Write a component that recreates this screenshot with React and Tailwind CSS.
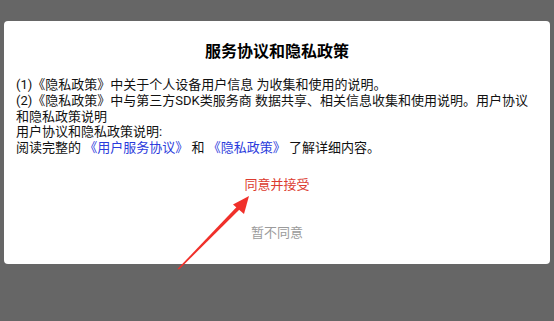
import React from "react";

const FONT = "font-['Roboto','Noto_Sans_CJK_SC',sans-serif]";

const Arrow = () => (
  <svg
    className="absolute left-0 top-0 pointer-events-none"
    width="554"
    height="321"
    viewBox="0 0 554 321"
  >
    {/* tapered shaft */}
    <polygon points="177.5,269 179,269.5 241.5,207.5 239,204.5" fill="#f0302a" />
    {/* head */}
    <polygon points="249,196 233,204.5 244,214" fill="#f0302a" />
  </svg>
);

export default function App() {
  return (
    <div className={`relative w-[554px] h-[321px] bg-[#666666] overflow-hidden ${FONT}`}>
      <div className="pt-[21px] px-[4px]">
        <div className="bg-white rounded-[4px] h-[243px] flex flex-col px-3 pt-[20px]">
          <h2 className="text-center text-[16px] leading-[22px] font-bold text-black">
            服务协议和隐私政策
          </h2>

          {/* policy text */}
          <div className="mt-[14px] text-[13px] leading-[15.75px] text-[#111]">
            <p>(1)《隐私政策》中关于个人设备用户信息 为收集和使用的说明。</p>
            <p>
              (2)《隐私政策》中与第三方SDK类服务商 数据共享、相关信息收集和使用说明。用户协议和隐私政策说明
            </p>
            <p>用户协议和隐私政策说明:</p>
            <p>
              阅读完整的 <span className="text-[#2b3bdc]">《用户服务协议》</span> 和{" "}
              <span className="text-[#2b3bdc]">《隐私政策》</span> 了解详细内容。
            </p>
          </div>

          {/* actions */}
          <div className="flex flex-col items-center mt-[14px]">
            <button className="h-[30px] text-[13px] text-[#dc3b30]">同意并接受</button>
            <button className="h-[30px] mt-[18px] text-[13px] text-[#9b9b9b]">暂不同意</button>
          </div>
        </div>
      </div>
      <Arrow />
    </div>
  );
}
